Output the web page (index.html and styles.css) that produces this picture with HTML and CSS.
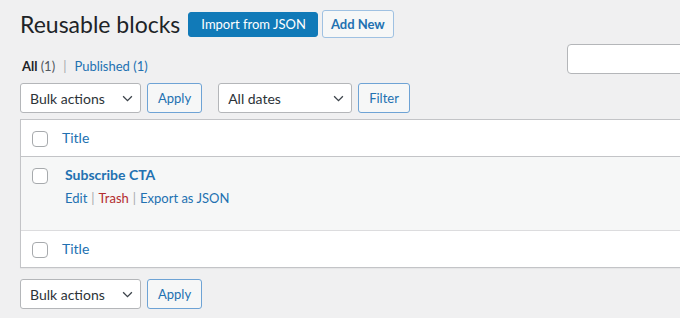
FILE: index.html
```html
<!DOCTYPE html>
<html lang="en">
<head>
    <meta charset="UTF-8">
    <meta name="viewport" content="width=device-width, initial-scale=1.0">
    <title>Reusable blocks</title>
    <link rel="stylesheet" href="styles.css">
</head>
<body>
    <div class="wrap">
        <div class="heading">
            <h1>Reusable blocks</h1>
            <a class="title-action primary" href="#">Import from JSON</a>
            <a class="title-action" href="#">Add New</a>
        </div>

        <div class="filters">
            <ul class="views">
                <li class="current">All <span class="count">(1)</span></li>
                <li class="sep">|</li>
                <li><a href="#">Published <span class="count">(1)</span></a></li>
            </ul>
            <div class="search">
                <input type="search" class="search-input">
            </div>
        </div>

        <div class="tablenav">
            <span class="select-wrap bulk">
                <select><option>Bulk actions</option></select>
                <svg class="chevron" viewBox="0 0 12 8"><path d="M1 1.5l5 5 5-5"/></svg>
            </span>
            <button class="button">Apply</button>
            <span class="select-wrap dates">
                <select><option>All dates</option></select>
                <svg class="chevron" viewBox="0 0 12 8"><path d="M1 1.5l5 5 5-5"/></svg>
            </span>
            <button class="button">Filter</button>
        </div>

        <table class="list">
            <thead>
                <tr>
                    <td class="check"><span class="checkbox"></span></td>
                    <th class="col-title"><a href="#">Title</a></th>
                </tr>
            </thead>
            <tbody>
                <tr class="alt">
                    <td class="check"><span class="checkbox"></span></td>
                    <td class="row-title">
                        <strong><a href="#">Subscribe CTA</a></strong>
                        <div class="row-actions">
                            <a href="#">Edit</a><span class="bar">|</span><a class="trash" href="#">Trash</a><span class="bar">|</span><a href="#">Export as JSON</a>
                        </div>
                    </td>
                </tr>
            </tbody>
            <tfoot>
                <tr>
                    <td class="check"><span class="checkbox"></span></td>
                    <th class="col-title"><a href="#">Title</a></th>
                </tr>
            </tfoot>
        </table>

        <div class="tablenav bottom">
            <span class="select-wrap bulk">
                <select><option>Bulk actions</option></select>
                <svg class="chevron" viewBox="0 0 12 8"><path d="M1 1.5l5 5 5-5"/></svg>
            </span>
            <button class="button">Apply</button>
        </div>
    </div>
</body>
</html>
```

FILE: styles.css
```css
body {
    font-family: 'Lato', 'Liberation Sans', sans-serif;
    background-color: #f0f0f1;
    color: #3c434a;
    margin: 0;
    padding: 0 0 0 20px;
    font-size: 13px;
    overflow: hidden;
}
a {
    color: #2271b1;
    text-decoration: none;
}
.wrap {
    width: 747px;
}
.heading {
    display: flex;
    align-items: center;
    height: 44px;
    padding-top: 4px;
    box-sizing: border-box;
}
h1 {
    font-size: 23px;
    font-weight: 400;
    color: #1d2327;
    margin: 0 8px 0 0;
    line-height: 29px;
}
.title-action {
    box-sizing: border-box;
    display: inline-flex;
    align-items: center;
    height: 28px;
    padding: 0 8px;
    border: 1px solid #9fc1e2;
    border-radius: 3px;
    background-color: #f6f7f7;
    color: #2271b1;
    font-size: 13px;
    font-weight: 700;
    margin-right: 4px;
}
.title-action.primary {
    height: 25px;
    padding: 0 11px 0 12px;
    background-color: #117ab8;
    border-color: #117ab8;
    color: #fff;
    font-weight: 400;
}
.filters {
    display: flex;
    justify-content: space-between;
    align-items: flex-start;
}
.views {
    list-style: none;
    margin: 12px 0 0 2px;
    padding: 0;
    display: flex;
    line-height: 20px;
    font-size: 13px;
}
.views .current {
    font-weight: 700;
    color: #1d2327;
}
.views .count {
    font-weight: 400;
    color: #50575e;
}
.views a .count {
    color: #2271b1;
}
.views .sep {
    color: #a7aaad;
    margin: 0 8px;
}
.search {
    display: flex;
    margin-top: 0;
}
.search-input {
    box-sizing: border-box;
    width: 200px;
    height: 30px;
    border: 1px solid #b4b6b9;
    border-radius: 4px;
    background: #fff;
}
.button {
    box-sizing: border-box;
    height: 30px;
    padding: 0 10px;
    border: 1px solid #6ea3d5;
    border-radius: 3px;
    background-color: #f6f7f7;
    color: #2271b1;
    font-family: inherit;
    font-size: 13px;
}
.tablenav {
    display: flex;
    align-items: center;
    margin-top: 7px;
    height: 30px;
}
.tablenav.bottom {
    margin-top: 11px;
}
.select-wrap {
    position: relative;
    display: inline-block;
    margin-right: 6px;
}
.select-wrap select {
    box-sizing: border-box;
    appearance: none;
    -webkit-appearance: none;
    height: 30px;
    padding: 0 24px 0 9px;
    border: 1px solid #b4b6b9;
    border-radius: 3px;
    background: #fff;
    color: #2c3338;
    font-family: inherit;
    font-size: 14px;
    display: block;
}
.bulk select {
    width: 121px;
}
.dates select {
    width: 134px;
}
.dates {
    margin-left: 16px;
}
.chevron {
    position: absolute;
    right: 8px;
    top: 12px;
    width: 11px;
    height: 7px;
    fill: none;
    stroke: #3c434a;
    stroke-width: 1.5;
    pointer-events: none;
}
.list {
    margin-top: 6px;
    width: 100%;
    border: 1px solid #c3c4c7;
    border-spacing: 0;
    background: #fff;
    box-shadow: 0 1px 1px rgba(0,0,0,0.04);
    font-size: 13px;
}
.list td, .list th {
    text-align: left;
    vertical-align: top;
    padding: 8px 10px;
    line-height: 20px;
    font-weight: 400;
}
.list thead th, .list thead td {
    border-bottom: 1px solid #c3c4c7;
}
.list tfoot th, .list tfoot td {
    border-top: 1px solid #dcdcde;
}
.col-title {
    font-size: 14px;
}
.list .check {
    width: 20px;
    padding: 11px 0 0 11px;
}
.checkbox {
    display: block;
    box-sizing: border-box;
    width: 16px;
    height: 16px;
    border: 1px solid #a7aaad;
    border-radius: 4px;
    background: #fff;
}
.alt {
    background-color: #f6f7f7;
}
.list .row-title {
    padding: 8px 10px 22px 13px;
    font-size: 14px;
}
.row-title strong {
    font-weight: 700;
}
.row-actions {
    margin-top: 3px;
    font-size: 13px;
    line-height: 20px;
}
.row-actions .bar {
    color: #a7aaad;
    margin: 0 4px;
}
.row-actions .trash {
    color: #b32d2e;
}
```
